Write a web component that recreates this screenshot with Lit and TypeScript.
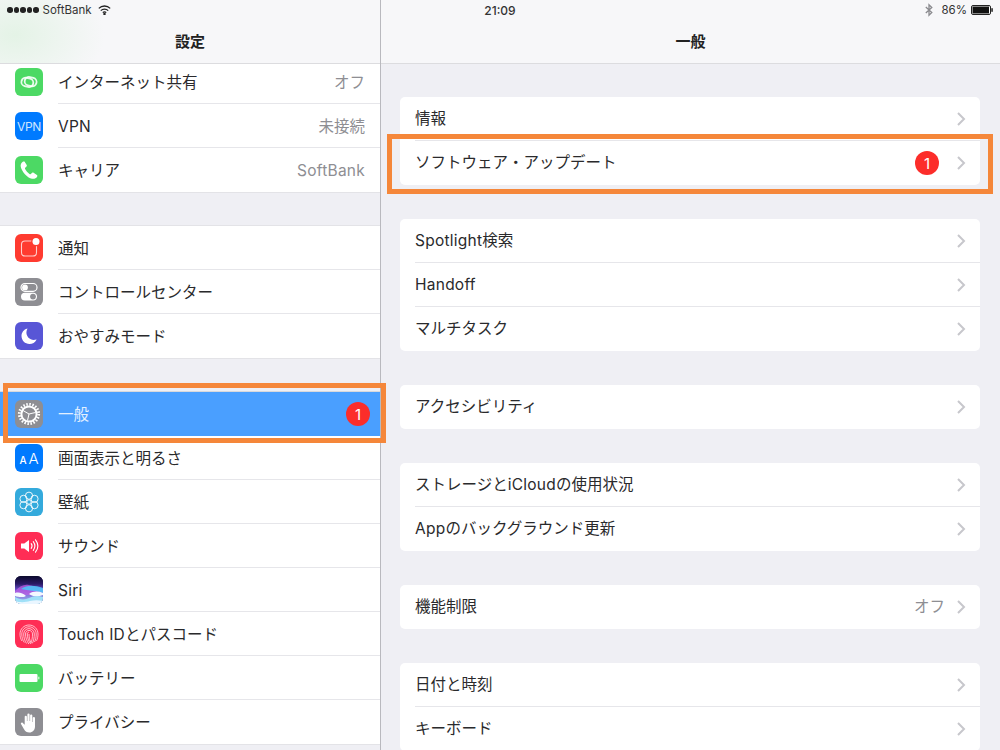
import { LitElement, html, css, svg, nothing } from "lit";
import { customElement } from "lit/decorators.js";

const icons: Record<string, unknown> = {
  hotspot: svg`<svg viewBox="0 0 28 28" fill="none" stroke="#fff" stroke-width="1.8" stroke-opacity=".88"><g transform="rotate(14 14 14)"><rect x="6.500" y="10.500" width="12" height="8.500" rx="4.250"/><rect x="9.500" y="9" width="12" height="8.500" rx="4.250"/></g></svg>`,
  phone: svg`<svg viewBox="0 0 28 28" fill="#fff"><path d="M9.500 5.600c-.5-.3-1.100-.3-1.700.1-1.700 1.200-2.500 3-2 5.200 1 4.500 6.300 10.700 11.200 11.800 2.100.5 4-.3 5.100-2 .4-.6.3-1.200-.2-1.600l-3.300-2.400c-.5-.3-1-.3-1.400.1l-1.400 1.300c-.3.3-.7.300-1 .1-2-1.300-3.800-3.500-4.800-5.500-.2-.4-.1-.7.2-1l1.300-1.300c.4-.4.500-1 .2-1.500z"/></svg>`,
  notif: svg`<svg viewBox="0 0 28 28" fill="none"><rect x="6.500" y="7" width="15" height="15" rx="3.500" stroke="#fff" stroke-opacity=".75" stroke-width="1.100"/><circle cx="21" cy="7.500" r="4.800" fill="#ff3b30"/><circle cx="21" cy="7.500" r="3.500" fill="#fff"/></svg>`,
  control: svg`<svg viewBox="0 0 28 28"><rect x="6" y="5.500" width="16" height="7.800" rx="3.900" fill="none" stroke="#fff" stroke-width="1.200"/><circle cx="10" cy="9.400" r="2.900" fill="#fff"/><rect x="6" y="14.700" width="16" height="7.800" rx="3.900" fill="#fff"/><circle cx="18" cy="18.600" r="2.900" fill="#8e8e93"/></svg>`,
  moon: svg`<svg viewBox="0 0 28 28" fill="#fff"><path d="M12.800 6.400c-.2 0-.3 0-.5.100-3.500 1-5.800 4-5.800 7.600 0 4.400 3.600 8 8 8 3.100 0 5.700-1.700 7-4.300.1-.2-.1-.4-.3-.3-.8.3-1.600.4-2.500.4-4.100 0-7.300-3.300-7.300-7.300 0-1.300.3-2.500.9-3.500.1-.2 0-.4-.2-.4z"/></svg>`,
  gear: svg`<svg viewBox="0 0 28 28" fill="none" stroke="#fff"><circle cx="14" cy="14" r="9.700" stroke-width="2.800" stroke-dasharray="1.500 1.548"/><circle cx="14" cy="14" r="7.600" stroke-width="2"/><path d="M14 14L8 10.500M14 14L20.500 12.500M14 14L12.500 20.500" stroke-width="1"/></svg>`,
  flower: svg`<svg viewBox="0 0 28 28" fill="none" stroke="#fff" stroke-width=".9"><g transform="translate(14 14)"><circle r="2.200"/><circle cy="-6.300" r="3.600"/><circle cy="6.300" r="3.600"/><circle cx="5.500" cy="-3.150" r="3.600"/><circle cx="-5.500" cy="-3.150" r="3.600"/><circle cx="5.500" cy="3.150" r="3.600"/><circle cx="-5.500" cy="3.150" r="3.600"/></g></svg>`,
  sound: svg`<svg viewBox="0 0 28 28" fill="none"><path d="M6 11.500h3.300L14 8v12l-4.700-3.500H6z" fill="#fff"/><g stroke="#fff" stroke-width="1.100" stroke-linecap="round"><path d="M16.200 11.600c1.100 1.500 1.100 3.300 0 4.800"/><path d="M18.300 9.700c2 2.700 2 5.900 0 8.600"/><path d="M20.500 7.800c2.900 3.800 2.900 8.600 0 12.400"/></g></svg>`,
  siri: svg`<svg viewBox="0 0 28 28"><defs><linearGradient id="sb" x1="0" y1="0" x2="0" y2="1"><stop offset="0" stop-color="#0b0a2c"/><stop offset=".28" stop-color="#2a1a66"/><stop offset=".5" stop-color="#6a4fd0"/><stop offset="1" stop-color="#a9c6f2"/></linearGradient></defs><rect width="28" height="28" fill="url(#sb)"/><path d="M0 15c5-5 9-7 14-6s9 3 14 4v6H0z" fill="#c25fe6" opacity=".7"/><path d="M6 13c6-4 13-4 22-1v5c-8-3-15-2-22-4z" fill="#4fc3f7" opacity=".9"/><path d="M0 17c4-1 7 0 10 2s-5 3-10 1z" fill="#f3f8ff"/><path d="M14 18c4-3 9-3 14-1v2c-5 2-10 2-14-1z" fill="#f3f8ff"/><path d="M0 21c5 3 10 3 14 1s9-3 14-1v7H0z" fill="#9fe0f7"/><path d="M0 25c6 2 11 1 15 0s9-1 13 0v3H0z" fill="#eaf6ff"/></svg>`,
  touch: svg`<svg viewBox="0 0 28 28" fill="none" stroke="#fff" stroke-opacity=".85" stroke-width=".8"><path d="M7 21c-1.500-2.200-2-4.500-2-7 0-5 4-9 9-9s9 4 9 9c0 2.500-.5 4.800-1.500 6.800"/><path d="M9.300 22.500c-1.700-2.500-2.500-5.300-2.500-8.500 0-4 3.200-7.200 7.200-7.200s7.200 3.200 7.200 7.200c0 3-.5 5.800-1.700 8"/><path d="M11.500 23.500c-1.800-2.800-2.800-6-2.800-9.500 0-3 2.400-5.400 5.300-5.400s5.300 2.400 5.300 5.400c0 3.600-.6 6.600-1.900 9.300"/><path d="M13.800 24c-1.900-3-3.300-6.400-3.300-10 0-2 1.600-3.600 3.500-3.600s3.500 1.600 3.500 3.600c0 3.800-.6 7-1.900 9.900"/><path d="M14 12.200c-1 0-1.700.8-1.700 1.800 0 3.500 1.200 6.800 3 9.500M14 14c0 3 .6 5.800 1.900 8.500"/></svg>`,
  battery: svg`<svg viewBox="0 0 28 28"><rect x="4.500" y="10" width="18" height="8" rx="1.100" fill="#fff"/><rect x="23.200" y="12.700" width="1.200" height="2.600" fill="#fff" opacity=".8"/></svg>`,
  hand: svg`<svg viewBox="0 0 28 28" fill="#fff"><path d="M9.700 15.500V8.800a1.100 1.100 0 0 1 2.200 0V13h.5V6.600a1.100 1.100 0 0 1 2.200 0V13h.5V7.600a1.100 1.100 0 0 1 2.200 0V14h.5V10a1.100 1.100 0 0 1 2.200 0v8.500c0 3.600-2.400 6-5.600 6-2.600 0-4.100-1.100-5.400-3.300l-3-5.100c-.6-1.100.8-2.200 1.800-1.200l1.900 1.900z" /></svg>`,
};

type Row = { label: string; icon?: string; color?: string; text?: string; value?: string; badge?: boolean; selected?: boolean; framed?: boolean; short?: boolean };

const leftGroups: Row[][] = [
  [
    { label: "インターネット共有", icon: "hotspot", color: "green", value: "オフ", short: true },
    { label: "VPN", text: "VPN", color: "blue", value: "未接続" },
    { label: "キャリア", icon: "phone", color: "green", value: "SoftBank" },
  ],
  [
    { label: "通知", icon: "notif", color: "red" },
    { label: "コントロールセンター", icon: "control", color: "gray" },
    { label: "おやすみモード", icon: "moon", color: "indigo" },
  ],
  [
    { label: "一般", icon: "gear", color: "gray", selected: true, badge: true, framed: true },
    { label: "画面表示と明るさ", text: "AA", color: "blue" },
    { label: "壁紙", icon: "flower", color: "sky" },
    { label: "サウンド", icon: "sound", color: "pink" },
    { label: "Siri", icon: "siri", color: "dark" },
    { label: "Touch IDとパスコード", icon: "touch", color: "pink" },
    { label: "バッテリー", icon: "battery", color: "green" },
    { label: "プライバシー", icon: "hand", color: "gray" },
  ],
];

const rightGroups: Row[][] = [
  [{ label: "情報" }, { label: "ソフトウェア・アップデート", badge: true, framed: true }],
  [{ label: "Spotlight検索" }, { label: "Handoff" }, { label: "マルチタスク" }],
  [{ label: "アクセシビリティ" }],
  [{ label: "ストレージとiCloudの使用状況" }, { label: "Appのバックグラウンド更新" }],
  [{ label: "機能制限", value: "オフ" }],
  [{ label: "日付と時刻" }, { label: "キーボード" }],
];

@customElement("app-root")
export class AppRoot extends LitElement {
  static styles = css`
    :host {
      display: block;
      width: 1000px;
      height: 750px;
      overflow: hidden;
      position: relative;
      background: #efeff4;
      color: #2a2a2c;
      font-family: "Inter", "Noto Sans CJK JP", sans-serif;
      font-size: 15.5px;
    }
    * { box-sizing: border-box; }
    .split { display: grid; grid-template-columns: 381px 619px; height: 750px; }
    .pane { display: flex; flex-direction: column; height: 750px; min-width: 0; }
    .pane.left { border-right: 1px solid #b9b9be; }
    .head {
      flex: 0 0 64px;
      padding-top: 18px;
      display: flex;
      align-items: center;
      justify-content: center;
      background: #f7f7f9;
      border-bottom: 1px solid #dcdcdf;
      font-weight: 700;
      font-size: 15px;
      color: #222;
    }
    .left .head {
      background: radial-gradient(ellipse 90px 60px at 15px 35px, #e4f3e6 0%, rgba(247, 247, 249, 0) 100%), #f7f7f9;
    }
    .body { flex: 1; min-height: 0; display: flex; flex-direction: column; gap: 34px; }
    .right .body { padding: 33px 20px 0 19px; }
    .left .group { background: #fff; box-shadow: 0 1px 0 #e3e3e7; }
    .left .group + .group { box-shadow: 0 1px 0 #e3e3e7, 0 -1px 0 #e3e3e7; }
    .right .group { background: #fff; border-radius: 5px; flex: none; }
    .row {
      position: relative;
      height: 44px;
      display: flex;
      align-items: center;
      padding: 0 15px;
    }
    .right .row { padding-right: 14px; }
    .row.short { height: 40px; padding-bottom: 4px; }
    .sep::after {
      content: "";
      position: absolute;
      left: 58px;
      right: 0;
      bottom: 0;
      height: 1px;
      background: #e6e6ea;
    }
    .right .sep::after { left: 15px; }
    .row.selected { background: #4a9fff; color: #e3f0ff; box-shadow: 0 -1px 0 #d8d8dc, 0 2px 0 #fff; z-index: 1; }
    .ico {
      flex: none;
      width: 28px;
      height: 28px;
      border-radius: 6px;
      margin-right: 15px;
      overflow: hidden;
      display: flex;
      align-items: center;
      justify-content: center;
      color: #fff;
    }
    .ico svg { display: block; width: 28px; height: 28px; }
    .green { background: #4cd964; }
    .blue { background: #007aff; }
    .red { background: #ff3b30; }
    .gray { background: #8e8e93; }
    .indigo { background: #5856d6; }
    .sky { background: #34aadc; }
    .pink { background: #ff2d55; }
    .dark { background: #1a1040; }
    .vpn { font-size: 12px; letter-spacing: -0.3px; color: #cfe6ff; }
    .aa { font-size: 15px; letter-spacing: 2px; margin-left: 2px; font-weight: 300; }
    .aa small { font-size: 10px; font-weight: 500; }
    .label { flex: 1; min-width: 0; white-space: nowrap; line-height: 18px; color: inherit; }
    .value { color: #8e8e93; white-space: nowrap; line-height: 18px; }
    .left .label, .left .value { margin-top: 2px; }
    .latin { letter-spacing: 0.25px; }
    .right .value { margin-right: 12px; }
    .badge {
      flex: none;
      width: 24px;
      height: 24px;
      border-radius: 50%;
      background: #fc2d2a;
      color: #fff;
      font-size: 15px;
      display: flex;
      align-items: center;
      justify-content: center;
    }
    .left .badge { margin-right: -5px; }
    .right .badge { margin-right: 18px; }
    .chev { flex: none; width: 9px; height: 14px; display: block; }
    .frame {
      position: absolute;
      border: 5px solid #f5873a;
      pointer-events: none;
      z-index: 2;
    }
    .left .frame { left: 3px; right: -6px; top: -9px; bottom: -7px; }
    .right .frame { left: -13px; right: -13px; top: -7px; bottom: -9px; }
    .status {
      position: absolute;
      left: 0;
      top: 0;
      width: 1000px;
      height: 20px;
      display: grid;
      grid-template-columns: 1fr auto 1fr;
      align-items: center;
      padding: 0 7px;
      font-size: 11.5px;
      color: #333;
      z-index: 3;
    }
    .st { display: flex; align-items: center; }
    .st.end { justify-content: flex-end; }
    .dots { display: flex; gap: 1px; margin-right: 4px; }
    .dots i { width: 5.5px; height: 5.5px; border-radius: 50%; background: #222; display: block; }
    .wifi { width: 13px; height: 10px; margin-left: 6px; display: block; }
    .bt { width: 8px; height: 14px; margin-right: 8px; display: block; }
    .time { font-weight: 500; font-size: 12px; }
    .batt { width: 22px; height: 10px; margin-left: 4px; display: block; }
  `;

  private chevron() {
    return html`<svg class="chev" viewBox="0 0 9 14" fill="none" stroke="#c7c7cc" stroke-width="2"><path d="M1 1l6 6-6 6"/></svg>`;
  }

  /* Latin runs sit a little wider in the reference than the CJK around them. */
  private txt(s: string) {
    return s.split(/([A-Za-z][A-Za-z ]*)/).map((part) =>
      /^[A-Za-z]/.test(part) ? html`<span class="latin">${part}</span>` : part
    );
  }

  private leftRow(r: Row, last: boolean) {
    return html`<div class="row ${r.selected ? "selected" : ""} ${last || r.selected ? "" : "sep"} ${r.short ? "short" : ""}">
      <div class="ico ${r.color}">
        ${r.text === "VPN"
          ? html`<span class="vpn">VPN</span>`
          : r.text === "AA"
            ? html`<span class="aa"><small>A</small>A</span>`
            : icons[r.icon!]}
      </div>
      <div class="label">${this.txt(r.label)}</div>
      ${r.value ? html`<div class="value">${this.txt(r.value)}</div>` : nothing}
      ${r.badge ? html`<div class="badge">1</div>` : nothing}
      ${r.framed ? html`<div class="frame"></div>` : nothing}
    </div>`;
  }

  private rightRow(r: Row, last: boolean) {
    return html`<div class="row ${last ? "" : "sep"}">
      <div class="label">${this.txt(r.label)}</div>
      ${r.value ? html`<div class="value">${r.value}</div>` : nothing}
      ${r.badge ? html`<div class="badge">1</div>` : nothing}
      ${this.chevron()}
      ${r.framed ? html`<div class="frame"></div>` : nothing}
    </div>`;
  }

  render() {
    return html`
      <div class="split">
        <div class="pane left">
          <div class="head">設定</div>
          <div class="body">
            ${leftGroups.map(
              (g) => html`<div class="group">${g.map((r, i) => this.leftRow(r, i === g.length - 1))}</div>`
            )}
          </div>
        </div>
        <div class="pane right">
          <div class="head">一般</div>
          <div class="body">
            ${rightGroups.map(
              (g) => html`<div class="group">${g.map((r, i) => this.rightRow(r, i === g.length - 1))}</div>`
            )}
          </div>
        </div>
      </div>
      <div class="status">
        <div class="st">
          <div class="dots"><i></i><i></i><i></i><i></i><i></i></div>
          <span>SoftBank</span>
          <svg class="wifi" viewBox="0 0 13 10" fill="none" stroke="#222" stroke-width="1.3"><path d="M.8 3.400a8 8 0 0 1 11.400 0"/><path d="M2.800 5.600a5.200 5.200 0 0 1 7.400 0"/><path d="M4.800 7.600a2.400 2.400 0 0 1 3.400 0"/><circle cx="6.500" cy="9" r=".6" fill="#222"/></svg>
        </div>
        <div class="time">21:09</div>
        <div class="st end">
          <svg class="bt" viewBox="0 0 8 13" fill="none" stroke="#8a8a8e" stroke-width="1.3"><path d="M.8 3.500l6 5.500L4 11.800V1.200L6.800 4 .8 9.500"/></svg>
          <span>86%</span>
          <svg class="batt" viewBox="0 0 22 10"><rect x=".5" y=".5" width="19" height="9" rx="1.500" fill="#fff" stroke="#222"/><rect x="1.500" y="1.500" width="16.500" height="7" fill="#111"/><rect x="20.300" y="3.200" width="1.500" height="3.600" fill="#222"/></svg>
        </div>
      </div>
    `;
  }
}
